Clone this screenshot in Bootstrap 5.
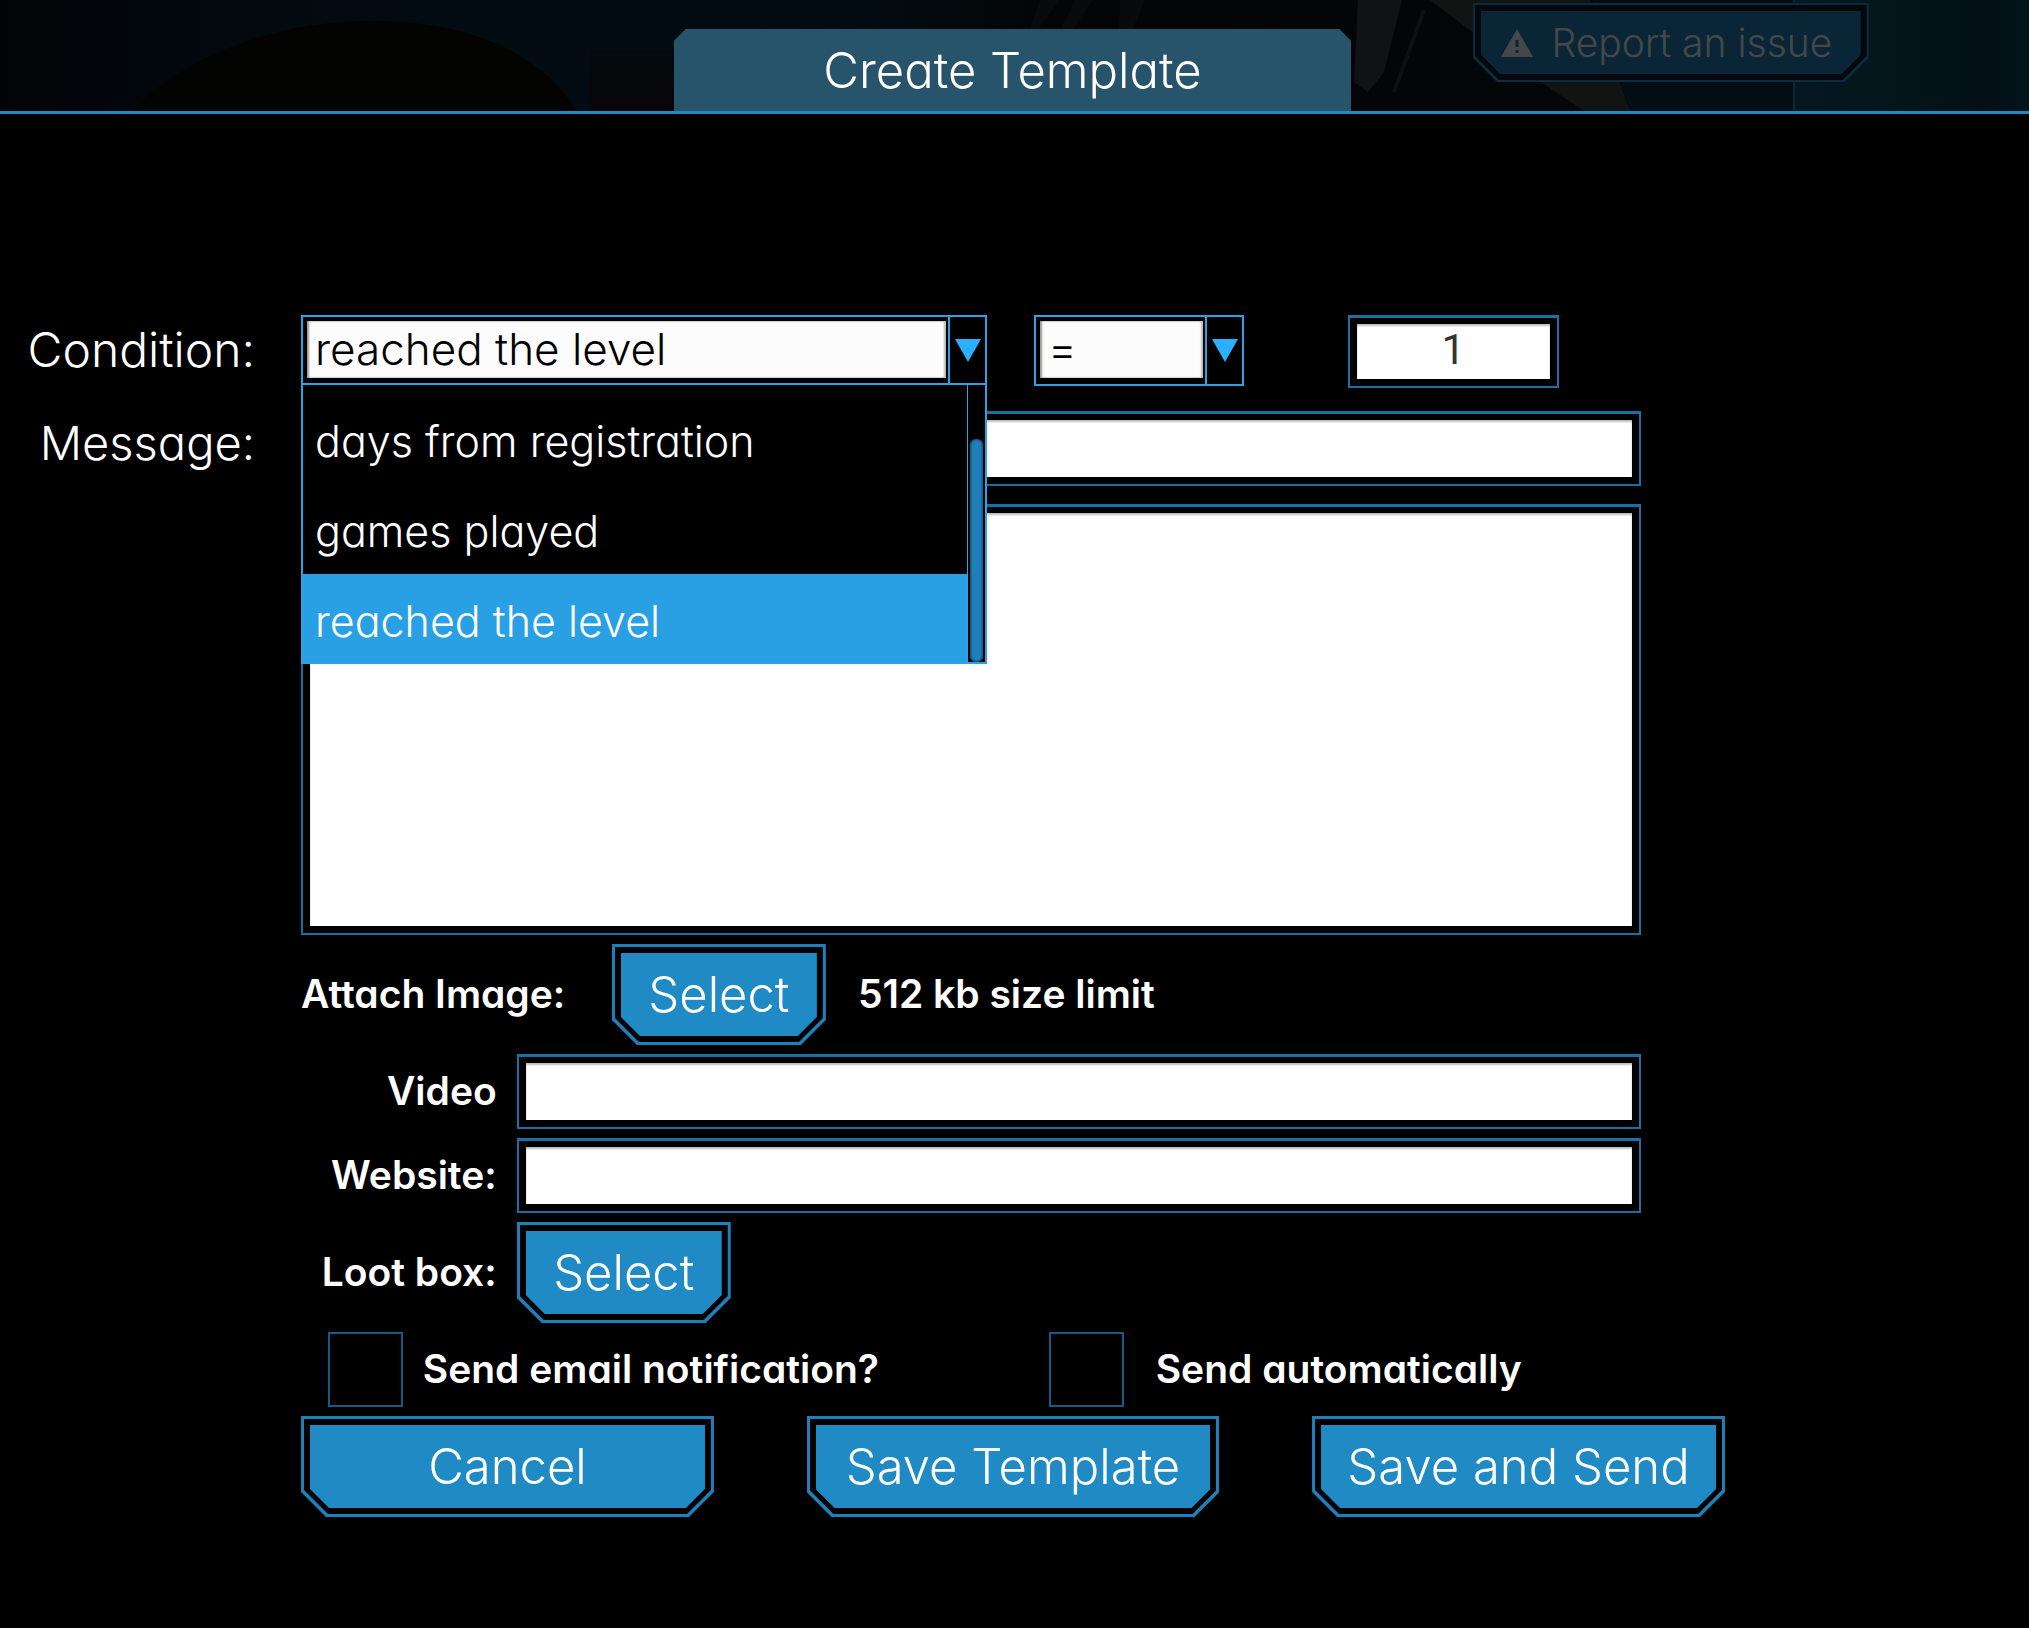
<!DOCTYPE html>
<html lang="en">
<head>
<meta charset="utf-8">
<meta name="viewport" content="width=device-width, initial-scale=1">
<title>Create Template</title>
<link href="https://cdn.jsdelivr.net/npm/bootstrap@5.3.0/dist/css/bootstrap.min.css" rel="stylesheet">
<style>
  :root { --edge: #1a6fa3; --fill: #208ac5; --hot: #29a2e6; }
  body { background: #000; color: #fff; font-family: Inter, "Open Sans", sans-serif; font-feature-settings: "cv11"; }
  .topbar { height: 114px; border-bottom: 3px solid #208ac5; background: #02090e; overflow: hidden; }
  .backdrop { position: absolute; inset: 0; width: 100%; height: 100%; }
  .tab-title { width: 33.4%; height: 82px; margin: 0 4px 0 0; background: #27536b; font-size: 49px; font-weight: 300; line-height: 84px;
    clip-path: polygon(12px 0, calc(100% - 12px) 0, 100% 12px, 100% 100%, 0 100%, 0 12px); }
  .report-spot { position: absolute; left: 72.6%; top: 3px; width: 19.5%; }

  .cut-btn { position: relative; isolation: isolate; display: block; height: 101px; padding: 0; border: 0; color: #fff; background: #1f7fb8;
    font-size: 49px; font-weight: 300; line-height: 102px; white-space: nowrap; --c: 25px;
    clip-path: polygon(0 0, 100% 0, 100% calc(100% - var(--c)), calc(100% - var(--c)) 100%, var(--c) 100%, 0 calc(100% - var(--c))); }
  .cut-btn::before, .cut-btn::after { content: ""; position: absolute; z-index: -1; inset: 3px; background: #000;
    clip-path: polygon(0 0, 100% 0, 100% calc(100% - 24px), calc(100% - 24px) 100%, 24px 100%, 0 calc(100% - 24px)); }
  .cut-btn::after { inset: 9px; background: var(--fill);
    clip-path: polygon(0 0, 100% 0, 100% calc(100% - 19px), calc(100% - 19px) 100%, 19px 100%, 0 calc(100% - 19px)); }
  .pick { width: 214px; }
  .report { height: 79px; width: 100%; font-size: 39px; color: #45484a; background: #0a2c40; --c: 24px; }
  .report > span { display: flex; align-items: center; justify-content: center; gap: 18px; height: 80px; padding-right: 8px; }
  .report::before { background: #02080c; inset: 2px; }
  .report::after { background: #0a2636; inset: 8px; }
  .report svg { width: 32px; height: 28px; }

  .sheet { display: grid; grid-template-columns: 301fr 1340fr 84fr 304fr; row-gap: 9px; padding-top: 201px; }
  .sheet > .side { grid-column: 1; font-size: 48px; font-weight: 300; text-align: right; padding-right: 46px; white-space: nowrap; line-height: 70px; }
  .sheet > .main { grid-column: 2; }
  .sheet > .wide { grid-column: 2 / 4; }
  .sheet > .row-subject { margin-top: 14px; line-height: 64px; font-size: 47px; }
  .sheet > .row-body { margin-top: 9px; }
  .frame { border: 2px solid var(--edge); border-top-width: 3px; padding: 6px 7px 7px; background: #000; }
  .frame > input, .frame > textarea { display: block; width: 100%; height: 57px; border: 0; border-radius: 0; background: #fff; color: #333;
    padding: 0 8px; font-size: 38px; resize: none; box-shadow: inset 0 2px 2px #bbb; outline: 0; }
  .frame > textarea { height: 413px; }
  .frame > .num { height: 55px; text-align: center; font-family: Roboto, sans-serif; font-size: 42px; padding-bottom: 4px; }

  .combo { position: relative; display: flex; height: 71px; border: 2px solid var(--hot); background: #000; }
  .combo select { flex: 1; min-width: 0; margin: 4px 2px 6px 4px; padding: 0 8px; border: 0; border-radius: 0; appearance: none; outline: 0;
    background: #fcfcfc; color: #000; font-size: 44px; font-weight: 300; line-height: 57px; box-shadow: inset 2px 0 2px #999, inset -2px 0 2px #bbb; }
  .combo .arrow { width: 37px; border-left: 2px solid var(--hot); display: flex; align-items: center; justify-content: center; }
  .combo .arrow svg { width: 26px; height: 23px; }
  .options { position: absolute; z-index: 5; left: -2px; right: -2px; top: 66px; height: 281px; display: flex; background: #000; border: 2px solid var(--hot); }
  .options ul { flex: 1; margin: 0; padding: 9px 0 0; list-style: none; }
  .options li { height: 90px; padding-left: 12px; font-size: 43px; font-weight: 300; line-height: 94px; }
  .options li[aria-selected=true] { height: 88px; background: #29a0e4; }
  .scroll { width: 18px; border-left: 1px solid var(--hot); padding: 54px 2px 0; }
  .scroll span { display: block; height: 100%; border-radius: 6px; background: #1f7fb8; box-shadow: inset 0 0 2px 1px #10486a; }

  .caption-b { font-size: 39px; font-weight: 600; white-space: nowrap; }
  .sub { width: 16.1%; padding-right: 20px; text-align: right; }
  .tick { appearance: none; flex: none; width: 75px; height: 75px; margin: 0; border: 2px solid #165a85; background: #000; border-radius: 0; }
</style>
<script src="https://cdn.jsdelivr.net/npm/bootstrap@5.3.0/dist/js/bootstrap.bundle.min.js"></script>
</head>
<body>
<header class="topbar position-relative d-flex align-items-end justify-content-center">
  <svg class="backdrop" viewBox="0 0 2029 111" preserveAspectRatio="none" aria-hidden="true">
    <defs>
      <linearGradient id="sky"><stop offset="0" stop-color="#010407"/><stop offset=".2" stop-color="#030b12"/><stop offset=".42" stop-color="#020c12"/><stop offset=".52" stop-color="#030506"/><stop offset="1" stop-color="#03080a"/></linearGradient>
      <linearGradient id="teal"><stop offset="0" stop-color="#041820"/><stop offset=".5" stop-color="#031519"/><stop offset=".8" stop-color="#021016"/><stop offset="1" stop-color="#03141a"/></linearGradient>
      <linearGradient id="rust" x2="0" y2="1"><stop offset="0" stop-color="#030a0e"/><stop offset="1" stop-color="#080506"/></linearGradient>
    </defs>
    <rect width="2029" height="111" fill="url(#sky)"/>
    <path d="M132 111C180 60 270 21 372 21C480 21 545 60 577 111Z" fill="#030302"/>
    <path d="M590 50h84v61h-84z" fill="url(#rust)"/>
    <path d="M1040 0h20l-22 29h-8zM1075 0h18l-20 29h-12zM1120 0h25l-12 29h-14z" fill="#080a0b"/>
    <path d="M1358 0h44l-18 72l-16 20l-14-10z" fill="#111213"/>
    <path d="M1430 0h160l40 111h-46l-60-40z" fill="#121313"/>
    <path d="M1424 10l-30 82" stroke="#0d1011" stroke-width="4"/>
    <path d="M1592 0h202v111h-164z" fill="#030e14"/>
    <path d="M1794 0h235v111h-235z" fill="url(#teal)"/>
    <path d="M1794 0v111" stroke="#062738" stroke-width="2"/>
  </svg>
  <h1 class="tab-title position-relative text-center">Create Template</h1>
  <div class="report-spot">
    <button type="button" class="cut-btn report">
      <span>
        <svg viewBox="0 0 32 28" aria-hidden="true"><path fill="#45484a" fill-rule="evenodd" d="M16 0L32 28H0ZM14.500 11v7h3v-7zM14.500 21v3h3v-3z"/></svg>
        Report an issue
      </span>
    </button>
  </div>
</header>

<form class="sheet">
  <label class="side" for="cond">Condition:</label>
  <div class="main d-flex align-items-start">
    <div class="combo" style="width:51.2%">
      <select id="cond"><option>days from registration</option><option>games played</option><option selected>reached the level</option></select>
      <span class="arrow"><svg viewBox="0 0 26 23" aria-hidden="true"><path fill="#2bb0ff" d="M0 0H26L13 23Z"/></svg></span>
      <div class="options">
        <ul role="listbox" aria-label="Condition">
          <li role="option">days from registration</li>
          <li role="option">games played</li>
          <li role="option" aria-selected="true">reached the level</li>
        </ul>
        <div class="scroll"><span></span></div>
      </div>
    </div>
    <div class="combo" style="width:15.7%;margin-left:3.5%">
      <select aria-label="Comparison"><option>=</option></select>
      <span class="arrow"><svg viewBox="0 0 26 23" aria-hidden="true"><path fill="#2bb0ff" d="M0 0H26L13 23Z"/></svg></span>
    </div>
    <div class="frame" style="width:15.8%;margin-left:7.7%"><input class="num" type="text" value="1" aria-label="Value"></div>
  </div>

  <label class="side row-subject" for="msg">Message:</label>
  <div class="main row-subject"><div class="frame"><input id="msg" type="text"></div></div>

  <div class="main row-body"><div class="frame"><textarea aria-label="Message body"></textarea></div></div>

  <div class="main d-flex align-items-center">
    <label class="caption-b" for="image" style="width:23.2%">Attach Image:</label>
    <button id="image" type="button" class="cut-btn pick">Select</button>
    <span class="caption-b ms-4 ps-2">512 kb size limit</span>
  </div>

  <div class="main d-flex align-items-center">
    <label class="caption-b sub" for="video">Video</label>
    <div class="frame flex-fill"><input id="video" type="text"></div>
  </div>
  <div class="main d-flex align-items-center">
    <label class="caption-b sub" for="site">Website:</label>
    <div class="frame flex-fill"><input id="site" type="text"></div>
  </div>
  <div class="main d-flex align-items-center">
    <label class="caption-b sub" for="loot">Loot box:</label>
    <button id="loot" type="button" class="cut-btn pick">Select</button>
  </div>

  <div class="main d-flex align-items-center">
    <div class="d-flex align-items-center" style="width:55.8%;padding-left:2%">
      <input class="tick" type="checkbox" id="mail"><label class="caption-b ps-3 ms-1" for="mail">Send email notification?</label>
    </div>
    <div class="d-flex align-items-center">
      <input class="tick" type="checkbox" id="auto"><label class="caption-b ps-4 ms-2" for="auto">Send automatically</label>
    </div>
  </div>

  <div class="wide d-flex justify-content-between">
    <button type="button" class="cut-btn" style="width:29%">Cancel</button>
    <button type="button" class="cut-btn" style="width:29%">Save Template</button>
    <button type="submit" class="cut-btn" style="width:29%">Save and Send</button>
  </div>
</form>
</body>
</html>
